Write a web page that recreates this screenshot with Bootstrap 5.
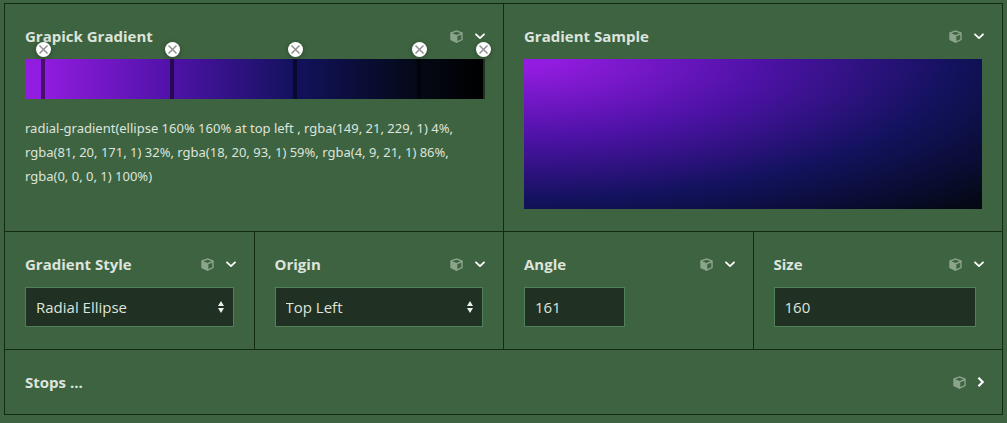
<!DOCTYPE html>
<html lang="en">
<head>
<meta charset="utf-8">
<meta name="viewport" content="width=device-width, initial-scale=1">
<title>Gradient Editor</title>
<link href="https://cdn.jsdelivr.net/npm/bootstrap@5.3.0/dist/css/bootstrap.min.css" rel="stylesheet">
<style>
  :root { --line: #132a13; --field: #203022; --field-line: #4f8057; --ink: #dde4dd; }
  body { background: #3e6340; color: var(--ink); font-family: "Open Sans", "Noto Sans", sans-serif; font-size: 15px; line-height: 24px; padding: 3px 4px 8px; }
  .panel { border: solid var(--line); border-width: 1px 0 0 1px; }
  .cell { border: solid var(--line); border-width: 0 1px 1px 0; }
  .cell-head { padding: 20px 17px 0 20px; }
  .cell-head.closed { padding-bottom: 20px; }
  .cell-body { padding: 11px 20px 22px; }
  .cell-title { font-size: 15px; line-height: 24px; font-weight: 700; }
  .tools { gap: 9px; }
  .tool { background: none; color: #fff; line-height: 0; }
  .tool.cube { color: #8ba58c; }
  .field { height: 40px; background-color: var(--field); border: 1px solid var(--field-line); border-radius: 0; color: var(--ink); font-size: 15px; line-height: 24px; padding: 7px 10px; }
  .field:focus { background-color: var(--field); color: #fff; border-color: #7db386; box-shadow: none; }
  select.field { background-image: url("data:image/svg+xml,%3Csvg xmlns='http://www.w3.org/2000/svg' viewBox='0 0 6 12'%3E%3Cpath fill='%23e8efe8' d='M0 5L3 0L6 5ZM0 7H6L3 12Z'/%3E%3C/svg%3E"); background-position: right 9px center; background-size: 6px 12px; }
  .field.short { width: 101px; }
  .size-body { padding-right: 26px; }
  .bar { height: 40px; background: linear-gradient(to right, rgb(146,28,223) 4%, rgb(79,18,168) 32%, rgb(18,18,93) 59%, rgb(4,9,21) 86%, #000 100%); }
  .stop { width: 4px; margin-left: -2px; background: rgba(0,0,0,.5); }
  .stop-close { width: 15px; height: 15px; bottom: 100%; left: 50%; margin: 0 0 2px -7px; background: #fff; color: #8f8f8f; line-height: 0; box-shadow: 0 1px 5px rgba(0,0,0,.3); }
  .code { font-family: "Noto Sans", "Open Sans", sans-serif; font-size: 13px; line-height: 24px; margin-top: 17px; }
  .sample { height: 150px; background: radial-gradient(ellipse 160% 160% at top left, rgb(146,28,223) 4%, rgb(79,18,168) 32%, rgb(18,18,93) 59%, rgb(4,9,21) 86%, #000 100%); }
</style>
</head>
<body>
<svg class="d-none" aria-hidden="true">
  <symbol id="i-cube" viewBox="0 0 13 13"><path fill="currentColor" fill-rule="evenodd" d="M6.5 0.3L12.7 2.6V10L6.5 12.9L0.3 10V2.6ZM6.5 1.7L2.3 3.3L6.5 5L10.7 3.3ZM7.3 6.3V11.1L11.3 9.2V4.7Z"/></symbol>
  <symbol id="i-down" viewBox="0 0 14 12"><path fill="none" stroke="currentColor" stroke-width="1.8" stroke-linecap="round" stroke-linejoin="round" d="M4 4.3L8 8.1L12 4.3"/></symbol>
  <symbol id="i-right" viewBox="0 0 10 12"><path fill="none" stroke="currentColor" stroke-width="2.2" d="M3.4 1.8L7.7 6L3.4 10.2"/></symbol>
  <symbol id="i-x" viewBox="0 0 15 15"><path fill="none" stroke="currentColor" stroke-width="1.5" d="M3.5 3.5L11.5 11.5M11.5 3.5L3.5 11.5"/></symbol>
</svg>
<main class="panel">
  <div class="row g-0">
    <section class="col-6 cell">
      <header class="cell-head d-flex align-items-center justify-content-between">
        <h2 class="cell-title mb-0">Grapick Gradient</h2>
        <div class="tools d-flex align-items-center">
          <button type="button" class="tool cube border-0 p-0" aria-label="Options"><svg width="13" height="13"><use href="#i-cube"/></svg></button>
          <button type="button" class="tool border-0 p-0" aria-label="Collapse"><svg width="14" height="12"><use href="#i-down"/></svg></button>
        </div>
      </header>
      <div class="cell-body">
        <div class="bar position-relative">
          <div class="stop position-absolute h-100" style="left:4%"><button type="button" class="stop-close position-absolute rounded-circle border-0 p-0" aria-label="Remove stop"><svg width="15" height="15"><use href="#i-x"/></svg></button></div>
          <div class="stop position-absolute h-100" style="left:32%"><button type="button" class="stop-close position-absolute rounded-circle border-0 p-0" aria-label="Remove stop"><svg width="15" height="15"><use href="#i-x"/></svg></button></div>
          <div class="stop position-absolute h-100" style="left:59%"><button type="button" class="stop-close position-absolute rounded-circle border-0 p-0" aria-label="Remove stop"><svg width="15" height="15"><use href="#i-x"/></svg></button></div>
          <div class="stop position-absolute h-100" style="left:86%"><button type="button" class="stop-close position-absolute rounded-circle border-0 p-0" aria-label="Remove stop"><svg width="15" height="15"><use href="#i-x"/></svg></button></div>
          <div class="stop position-absolute h-100" style="left:100%"><button type="button" class="stop-close position-absolute rounded-circle border-0 p-0" aria-label="Remove stop"><svg width="15" height="15"><use href="#i-x"/></svg></button></div>
        </div>
        <p class="code mb-0">radial-gradient(ellipse 160% 160% at top left , rgba(149, 21, 229, 1) 4%, rgba(81, 20, 171, 1) 32%, rgba(18, 20, 93, 1) 59%, rgba(4, 9, 21, 1) 86%, rgba(0, 0, 0, 1) 100%)</p>
      </div>
    </section>
    <section class="col-6 cell">
      <header class="cell-head d-flex align-items-center justify-content-between">
        <h2 class="cell-title mb-0">Gradient Sample</h2>
        <div class="tools d-flex align-items-center">
          <button type="button" class="tool cube border-0 p-0" aria-label="Options"><svg width="13" height="13"><use href="#i-cube"/></svg></button>
          <button type="button" class="tool border-0 p-0" aria-label="Collapse"><svg width="14" height="12"><use href="#i-down"/></svg></button>
        </div>
      </header>
      <div class="cell-body"><div class="sample"></div></div>
    </section>
    <section class="col-3 cell">
      <header class="cell-head d-flex align-items-center justify-content-between">
        <label class="cell-title" for="style">Gradient Style</label>
        <div class="tools d-flex align-items-center">
          <button type="button" class="tool cube border-0 p-0" aria-label="Options"><svg width="13" height="13"><use href="#i-cube"/></svg></button>
          <button type="button" class="tool border-0 p-0" aria-label="Collapse"><svg width="14" height="12"><use href="#i-down"/></svg></button>
        </div>
      </header>
      <div class="cell-body"><select id="style" class="form-select field"><option>Radial Ellipse</option></select></div>
    </section>
    <section class="col-3 cell">
      <header class="cell-head d-flex align-items-center justify-content-between">
        <label class="cell-title" for="origin">Origin</label>
        <div class="tools d-flex align-items-center">
          <button type="button" class="tool cube border-0 p-0" aria-label="Options"><svg width="13" height="13"><use href="#i-cube"/></svg></button>
          <button type="button" class="tool border-0 p-0" aria-label="Collapse"><svg width="14" height="12"><use href="#i-down"/></svg></button>
        </div>
      </header>
      <div class="cell-body"><select id="origin" class="form-select field"><option>Top Left</option></select></div>
    </section>
    <section class="col-3 cell">
      <header class="cell-head d-flex align-items-center justify-content-between">
        <label class="cell-title" for="angle">Angle</label>
        <div class="tools d-flex align-items-center">
          <button type="button" class="tool cube border-0 p-0" aria-label="Options"><svg width="13" height="13"><use href="#i-cube"/></svg></button>
          <button type="button" class="tool border-0 p-0" aria-label="Collapse"><svg width="14" height="12"><use href="#i-down"/></svg></button>
        </div>
      </header>
      <div class="cell-body"><input id="angle" type="text" inputmode="numeric" class="form-control field short" value="161"></div>
    </section>
    <section class="col-3 cell">
      <header class="cell-head d-flex align-items-center justify-content-between">
        <label class="cell-title" for="size">Size</label>
        <div class="tools d-flex align-items-center">
          <button type="button" class="tool cube border-0 p-0" aria-label="Options"><svg width="13" height="13"><use href="#i-cube"/></svg></button>
          <button type="button" class="tool border-0 p-0" aria-label="Collapse"><svg width="14" height="12"><use href="#i-down"/></svg></button>
        </div>
      </header>
      <div class="cell-body size-body"><input id="size" type="text" inputmode="numeric" class="form-control field" value="160"></div>
    </section>
    <section class="col-12 cell">
      <header class="cell-head closed d-flex align-items-center justify-content-between">
        <h2 class="cell-title mb-0">Stops ...</h2>
        <div class="tools d-flex align-items-center">
          <button type="button" class="tool cube border-0 p-0" aria-label="Options"><svg width="13" height="13"><use href="#i-cube"/></svg></button>
          <button type="button" class="tool border-0 p-0" aria-label="Expand"><svg width="10" height="12"><use href="#i-right"/></svg></button>
        </div>
      </header>
    </section>
  </div>
</main>
<script src="https://cdn.jsdelivr.net/npm/bootstrap@5.3.0/dist/js/bootstrap.bundle.min.js"></script>
</body>
</html>
